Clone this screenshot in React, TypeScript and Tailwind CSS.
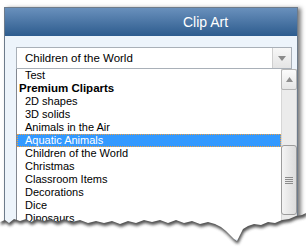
import React from 'react'

const items: { label: string; bold?: boolean; selected?: boolean }[] = [
  { label: 'Test' },
  { label: 'Premium Cliparts', bold: true },
  { label: '2D shapes' },
  { label: '3D solids' },
  { label: 'Animals in the Air' },
  { label: 'Aquatic Animals', selected: true },
  { label: 'Children of the World' },
  { label: 'Christmas' },
  { label: 'Classroom Items' },
  { label: 'Decorations' },
  { label: 'Dice' },
  { label: 'Dinosaurs' },
  { label: 'Dolls' },
]

// torn paper edge, page coordinates
const edge: [number, number][] = [
  [0, 222], [5, 220], [9, 223], [14, 219], [20, 221], [26, 219], [31, 222], [37, 219],
  [44, 221], [50, 219], [57, 222], [64, 219], [72, 222], [80, 220], [88, 223], [96, 221],
  [104, 223], [112, 221], [120, 224], [128, 221], [136, 223], [144, 220], [152, 222],
  [160, 220], [168, 223], [176, 220], [184, 223], [192, 221], [200, 224], [208, 222],
  [215, 224], [221, 227], [226, 231], [230, 235], [234, 239], [237, 241], [240, 235],
  [243, 229], [248, 226], [254, 224], [261, 225], [268, 222], [275, 223], [282, 220],
  [289, 219], [296, 216], [302, 215], [306, 213],
]

const paper = 'M0,0 ' + edge.map(([x, y]) => `L${x},${y}`).join(' ') + ' L306,0 Z'

function TornEdge() {
  return (
    <svg className="pointer-events-none absolute inset-0" width={306} height={247} viewBox="0 0 306 247">
      <defs>
        <filter id="blur" x="-10%" y="-10%" width="120%" height="130%">
          <feGaussianBlur stdDeviation="1.5" />
        </filter>
        <mask id="below">
          <rect width="306" height="247" fill="white" />
          <path d={paper} fill="black" />
        </mask>
      </defs>
      <g mask="url(#below)">
        <rect width="306" height="247" fill="white" />
        <path d={paper} fill="#404040" opacity="0.9" transform="translate(1,3)" filter="url(#blur)" />
      </g>
    </svg>
  )
}

export default function App() {
  return (
    <div className="relative h-[247px] w-[306px] overflow-hidden bg-white font-['Liberation_Sans',Arial,sans-serif]">
      <div className="ml-[4px] mt-[7px] h-[240px] w-[294px] border border-b-0 border-[#6d7b8b] bg-[#edf4fb] shadow-[3px_1px_4px_rgba(0,0,0,0.5)]">
        {/* Header */}
        <div className="flex h-[28px] items-center bg-gradient-to-b from-[#6990bc] to-[#2d5c8e] pl-[178px] text-[14px] text-white">
          Clip Art
        </div>

        <div className="pl-[11px] pt-[11px]">
          {/* Select box */}
          <div className="flex h-[22px] w-[276px] border border-[#a9b0b8] bg-white">
            <div className="flex-1 pl-[8px] text-[11.5px] leading-[20px] text-black">Children of the World</div>
            <div className="flex w-[19px] items-center justify-center border-l border-[#cfcfcf] bg-gradient-to-b from-[#f7f7f7] to-[#e4e4e4]">
              <svg width="8" height="5" viewBox="0 0 8 5">
                <path d="M0,0 L8,0 L4,5 Z" fill="#8a8a8a" />
              </svg>
            </div>
          </div>

          {/* Dropdown list */}
          <div className="flex h-[170px] w-[281px] border-l border-[#828790] bg-white">
            <div className="flex-1">
              {items.map((it) =>
                it.selected ? (
                  <div
                    key={it.label}
                    className="h-[13px] border border-dotted border-[#f0a040] bg-[#3399ff] pl-[7px] text-[11px] leading-[11px] text-white"
                  >
                    {it.label}
                  </div>
                ) : (
                  <div
                    key={it.label}
                    className={
                      it.bold
                        ? 'h-[13px] pl-[2px] text-[11.5px] font-bold leading-[13px] text-black'
                        : 'h-[13px] pl-[8px] text-[11px] leading-[13px] text-black'
                    }
                  >
                    {it.label}
                  </div>
                )
              )}
            </div>

            {/* Scrollbar */}
            <div className="flex w-[16px] flex-col bg-[#ebebeb] shadow-[inset_1px_0_0_#d6d6d6,inset_-1px_0_0_#d6d6d6]">
              <div className="flex h-[21px] items-center justify-center rounded-[2px] border border-[#b5b5b5] bg-gradient-to-b from-[#fbfbfb] to-[#e6e6e6]">
                <svg width="7" height="5" viewBox="0 0 7 5">
                  <path d="M0,5 L7,5 L3.5,0 Z" fill="#8f8f8f" />
                </svg>
              </div>
              <div className="mt-[55px] flex h-[70px] flex-col items-center justify-center gap-[1px] rounded-[3px] border border-[#9c9c9c] bg-gradient-to-r from-[#f4f4f4] to-[#dcdcdc]">
                <div className="h-[1px] w-[8px] bg-[#8c8c8c]" />
                <div className="h-[1px] w-[8px] bg-[#8c8c8c]" />
                <div className="h-[1px] w-[8px] bg-[#8c8c8c]" />
                <div className="h-[1px] w-[8px] bg-[#8c8c8c]" />
              </div>
            </div>
          </div>
        </div>
      </div>
      <TornEdge />
    </div>
  )
}
